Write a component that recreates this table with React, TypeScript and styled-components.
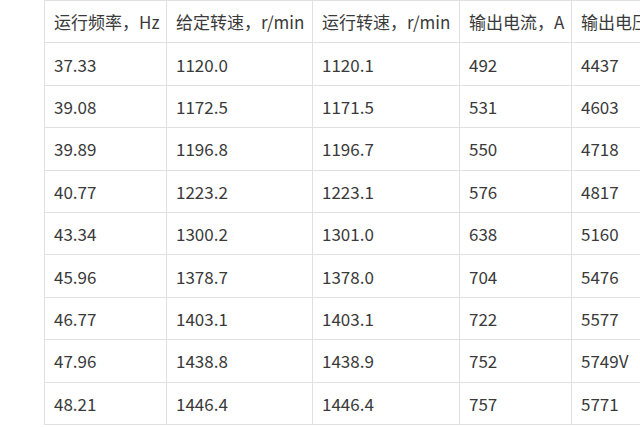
import styled, { createGlobalStyle } from "styled-components";

const GlobalStyle = createGlobalStyle`
  html, body {
    margin: 0;
    padding: 0;
    background: #ffffff;
    overflow: hidden;
  }
`;

const headers = ["运行频率，Hz", "给定转速，r/min", "运行转速，r/min", "输出电流，A", "输出电压，V"];

const rows = [
  ["37.33", "1120.0", "1120.1", "492", "4437"],
  ["39.08", "1172.5", "1171.5", "531", "4603"],
  ["39.89", "1196.8", "1196.7", "550", "4718"],
  ["40.77", "1223.2", "1223.1", "576", "4817"],
  ["43.34", "1300.2", "1301.0", "638", "5160"],
  ["45.96", "1378.7", "1378.0", "704", "5476"],
  ["46.77", "1403.1", "1403.1", "722", "5577"],
  ["47.96", "1438.8", "1438.9", "752", "5749V"],
  ["48.21", "1446.4", "1446.4", "757", "5771"],
];

const colWidths = [122, 146, 147, 112, 140];

const App = () => {
  return (
    <S.Page>
      <GlobalStyle />
      <S.Table>
        <colgroup>
          {colWidths.map((w, i) => (
            <S.Col key={i} $width={w} />
          ))}
        </colgroup>
        <tbody>
          <S.Row>
            {headers.map((h) => (
              <S.Cell key={h}>{h}</S.Cell>
            ))}
          </S.Row>
          {rows.map((r, i) => (
            <S.Row key={i}>
              {r.map((c, j) => (
                <S.Cell key={j}>{c}</S.Cell>
              ))}
            </S.Row>
          ))}
        </tbody>
      </S.Table>
    </S.Page>
  );
};
export default App;

const Page = styled.div`
  width: 640px;
  height: 427px;
  overflow: hidden;
  padding-left: 44px;
  box-sizing: border-box;
  background: #ffffff;
`;

const Table = styled.table`
  border-collapse: collapse;
  table-layout: fixed;
  width: 667px;
  font-family: "Noto Sans CJK SC", "Noto Sans", sans-serif;
  font-size: 17px;
  color: #3a3a3a;
`;

const Col = styled.col<{ $width: number }>`
  width: ${({ $width }) => $width}px;
`;

const Row = styled.tr`
  height: 42.4px;
`;

const Cell = styled.td`
  border: 1px solid #e0e0e0;
  padding: 0 0 0 9px;
  white-space: nowrap;
  overflow: hidden;
  vertical-align: middle;
`;

const S = {
  Page,
  Table,
  Col,
  Row,
  Cell,
};
